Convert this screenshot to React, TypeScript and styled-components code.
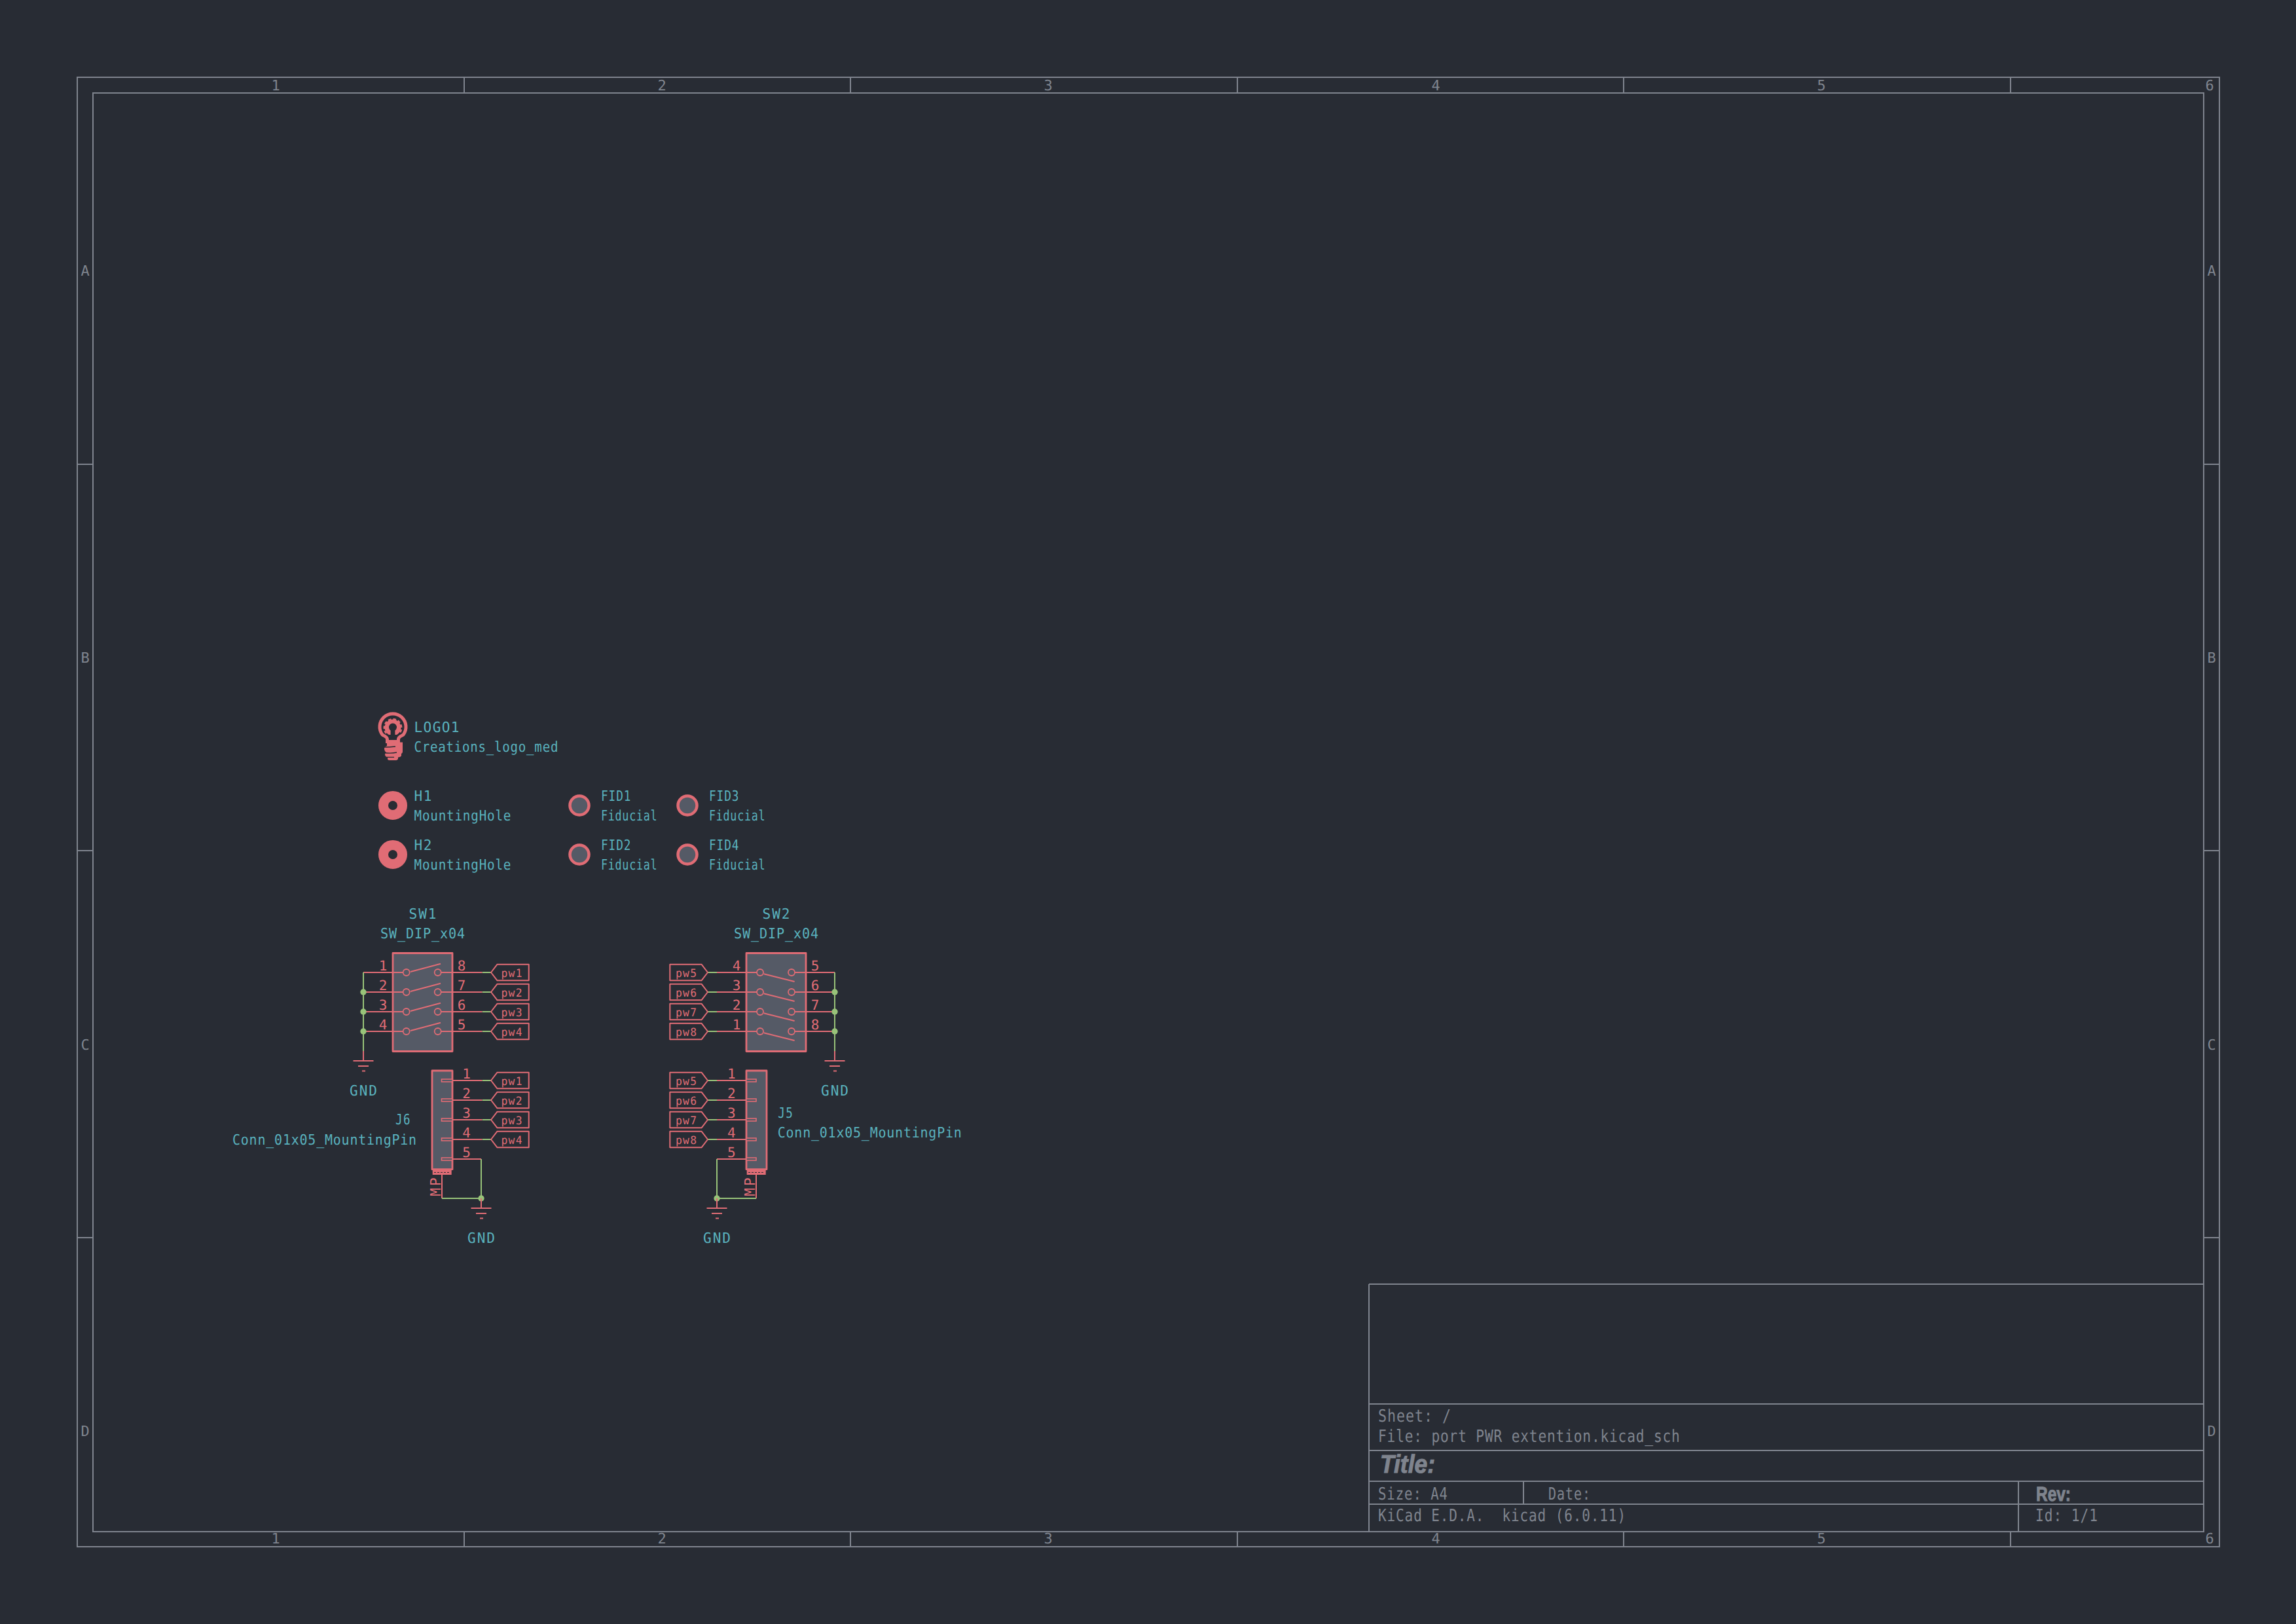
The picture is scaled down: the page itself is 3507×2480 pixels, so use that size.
import React from "react";
import styled, { createGlobalStyle } from "styled-components";

const FRAME = "#7f848e";
const SYMBOL = "#e06c75";
const WIRE = "#98c379";
const PAGE = "#282c34";
const BODY = "#555a66";
const MONO_ADVANCE = 0.602;

const Global = createGlobalStyle`
  html, body { margin: 0; padding: 0; background: ${PAGE}; }
`;

const Sheet = styled.svg`
  display: block;
  width: 3507px;
  height: 2480px;
  background: ${PAGE};
  text-rendering: geometricPrecision;
`;

const FrameLine = styled.line`
  stroke: ${FRAME};
  stroke-width: 2;
`;
const FrameRect = styled.rect`
  fill: none;
  stroke: ${FRAME};
  stroke-width: 2;
`;
const SheetText = styled.text`
  fill: #7f848e;
  font-family: "DejaVu Sans Mono", monospace;
  font-size: 26px;
  white-space: pre;
`;
const TickText = styled.text`
  fill: ${FRAME};
  font-family: "DejaVu Sans Mono", monospace;
  font-size: 22px;
  text-anchor: middle;
`;
const HeadingText = styled.text<{ $italic?: boolean }>`
  fill: ${FRAME};
  font-family: "Liberation Sans", sans-serif;
  font-weight: 700;
  font-style: ${(p) => (p.$italic ? "italic" : "normal")};
  stroke: ${FRAME};
  stroke-width: 1;
`;
const FieldText = styled.text`
  fill: #5ab2be;
  font-family: "DejaVu Sans Mono", monospace;
  font-size: 22px;
`;
const PinNumber = styled.text`
  fill: ${SYMBOL};
  font-family: "DejaVu Sans Mono", monospace;
  font-size: 21px;
  text-anchor: middle;
`;
const MountText = styled.text`
  fill: ${SYMBOL};
  font-family: "DejaVu Sans Mono", monospace;
  font-size: 22px;
`;
const LabelText = styled.text`
  fill: ${SYMBOL};
  font-family: "DejaVu Sans Mono", monospace;
  font-size: 17px;
`;
const PinLine = styled.path`
  fill: none;
  stroke: ${SYMBOL};
  stroke-width: 2;
`;
const WireLine = styled.path`
  fill: none;
  stroke: ${WIRE};
  stroke-width: 2;
`;
const Junction = styled.circle`
  fill: ${WIRE};
`;
const Body = styled.rect`
  fill: ${BODY};
  stroke: ${SYMBOL};
  stroke-width: 2.8;
  stroke-linejoin: round;
`;
const Contact = styled.circle`
  fill: none;
  stroke: ${SYMBOL};
  stroke-width: 1.8;
`;
const Stub = styled.rect`
  fill: ${BODY};
  stroke: ${SYMBOL};
  stroke-width: 1.6;
`;
const MountBar = styled.rect`
  fill: ${SYMBOL};
`;
const MountSpeck = styled.path`
  fill: none;
  stroke: ${PAGE};
  stroke-width: 1;
  stroke-dasharray: 3 2;
`;
const LabelOutline = styled.path`
  fill: none;
  stroke: ${SYMBOL};
  stroke-width: 2;
  stroke-linejoin: round;
`;
const SolidShape = styled.path`
  fill: ${SYMBOL};
`;
const BulbStroke = styled.path`
  fill: none;
  stroke: ${SYMBOL};
  stroke-width: 5;
`;
const GearTeeth = styled.path`
  fill: none;
  stroke: ${SYMBOL};
  stroke-width: 2.5;
  stroke-dasharray: 4.6 3;
`;
const CoilGap = styled.path`
  fill: none;
  stroke: ${PAGE};
  stroke-width: 1.3;
`;
const HoleRing = styled.circle`
  fill: none;
  stroke: ${SYMBOL};
  stroke-width: 15;
`;
const FiducialDot = styled.circle`
  fill: ${BODY};
  stroke: ${SYMBOL};
  stroke-width: 4.5;
`;

type Txt = { x: number; y: number; w: number; t: string };

/** Narrow glyphs spread over a measured width, as the plotter font of the sheet draws them. */
const spread = (x: number, y: number, w: number, t: string, size: number, rotate = 0) => {
  const natural = t.length * MONO_ADVANCE * size;
  const sx = Math.min(0.96, (0.94 * w) / natural);
  return {
    transform: `translate(${x} ${y}) rotate(${rotate}) scale(${sx.toFixed(3)} 1)`,
    textLength: w / sx,
    lengthAdjust: "spacing" as const,
  };
};

const Field = ({ x, y, w, t }: Txt) => <FieldText {...spread(x, y, w, t, 22)}>{t}</FieldText>;
const Meta = ({ x, y, w, t }: Txt) => <SheetText {...spread(x, y, w, t, 26)}>{t}</SheetText>;

const xTicks = [709, 1299, 1890, 2480, 3071];
const yTicks = [709, 1299, 1890];
const xMarks: [string, number][] = [
  ["1", 421],
  ["2", 1011],
  ["3", 1601],
  ["4", 2193],
  ["5", 2782],
  ["6", 3375],
];
const yMarks: [string, number][] = [
  ["A", 421],
  ["B", 1012],
  ["C", 1603],
  ["D", 2193],
];

const Frame = () => (
  <g>
    <FrameRect x={118} y={118} width={3272} height={2244} />
    <FrameRect x={142} y={142} width={3224} height={2197} />
    {xTicks.map((x) => (
      <g key={x}>
        <FrameLine x1={x} y1={118} x2={x} y2={142} />
        <FrameLine x1={x} y1={2339} x2={x} y2={2362} />
      </g>
    ))}
    {yTicks.map((y) => (
      <g key={y}>
        <FrameLine x1={118} y1={y} x2={142} y2={y} />
        <FrameLine x1={3366} y1={y} x2={3390} y2={y} />
      </g>
    ))}
    {xMarks.map(([t, x]) => (
      <g key={t}>
        <TickText x={x} y={138}>{t}</TickText>
        <TickText x={x} y={2357}>{t}</TickText>
      </g>
    ))}
    {yMarks.map(([t, y]) => (
      <g key={t}>
        <TickText x={130} y={y}>{t}</TickText>
        <TickText x={3378} y={y}>{t}</TickText>
      </g>
    ))}
  </g>
);

const TitleBlock = () => (
  <g>
    <FrameLine x1={2091} y1={1961} x2={3366} y2={1961} />
    <FrameLine x1={2091} y1={1961} x2={2091} y2={2339} />
    <FrameLine x1={2091} y1={2144} x2={3366} y2={2144} />
    <FrameLine x1={2091} y1={2215} x2={3366} y2={2215} />
    <FrameLine x1={2091} y1={2262} x2={3366} y2={2262} />
    <FrameLine x1={2091} y1={2297} x2={3366} y2={2297} />
    <FrameLine x1={2327} y1={2262} x2={2327} y2={2297} />
    <FrameLine x1={3083} y1={2262} x2={3083} y2={2339} />
    <Meta x={2105} y={2171} w={111} t="Sheet: /" />
    <Meta x={2105} y={2202} w={461} t="File: port PWR extention.kicad_sch" />
    <HeadingText
      $italic
      x={2108}
      y={2249}
      fontSize={39}
      textLength={84}
      lengthAdjust="spacingAndGlyphs"
    >
      Title:
    </HeadingText>
    <Meta x={2105} y={2290} w={106} t="Size: A4" />
    <Meta x={2365} y={2290} w={64} t="Date:" />
    <Meta x={2105} y={2323} w={378} t="KiCad E.D.A.  kicad (6.0.11)" />
    <HeadingText
      x={3110}
      y={2291.5}
      fontSize={31}
      textLength={53}
      lengthAdjust="spacingAndGlyphs"
    >
      Rev:
    </HeadingText>
    <Meta x={3109} y={2323} w={95} t="Id: 1/1" />
  </g>
);

const Ground = ({ x, y }: { x: number; y: number }) => (
  <g>
    <PinLine d={`M${x} ${y - 15}V${y}M${x - 15.5} ${y}H${x + 15.5}M${x - 8} ${y + 8}H${x + 8}M${x - 2} ${y + 15.5}H${x + 3}`} />
    <Field x={x - 21} y={y + 53} w={42} t="GND" />
  </g>
);

/** Global label whose point faces the symbol. dir = -1: body to the right of the tip. */
const GlobalLabel = ({ tip, y, t, dir }: { tip: number; y: number; t: string; dir: 1 | -1 }) => {
  const far = tip - dir * 57.7;
  const near = tip - dir * 9.5;
  const tx = dir === -1 ? tip + 15.5 : tip - 49;
  return (
    <g>
      <LabelOutline d={`M${tip} ${y}L${near} ${y - 12.3}H${far}V${y + 12.3}H${near}Z`} />
      <LabelText {...spread(tx, y + 6.7, 32, t, 17)}>{t}</LabelText>
    </g>
  );
};

const rows = [0, 1, 2, 3];

const DipSwitch = ({
  bx,
  leftCircle,
  flip,
  leftNums,
  rightNums,
  railX,
  labelTip,
  labels,
  labelSide,
  refName,
  numLeft,
  numRight,
}: {
  bx: number;
  leftCircle: number;
  flip: boolean;
  leftNums: string[];
  rightNums: string[];
  railX: number;
  labelTip: number;
  labels: string[];
  labelSide: 1 | -1;
  refName: string;
  numLeft: number;
  numRight: number;
}) => {
  const rightCircle = leftCircle + 48;
  const pinEnd = labelSide === -1 ? labelTip - 13.3 : labelTip + 14;
  return (
    <g>
      <Body x={bx} y={1455.5} width={91} height={150} />
      <Field x={bx + 24.5} y={1402.7} w={42} t={refName} />
      <Field x={bx - 19} y={1432.7} w={129} t="SW_DIP_x04" />
      {rows.map((i) => {
        const y = 1485 + i * 30;
        return (
          <g key={i}>
            <Contact cx={leftCircle} cy={y} r={5} />
            <Contact cx={rightCircle} cy={y} r={5} />
            {flip ? (
              <PinLine d={`M${leftCircle + 5.7} ${y + 2.3}L${rightCircle + 4.6} ${y + 14}`} />
            ) : (
              <PinLine d={`M${leftCircle + 6.3} ${y - 1}L${rightCircle + 4.3} ${y - 13.3}`} />
            )}
            {labelSide === -1 ? (
              <>
                <PinLine d={`M${railX} ${y}H${leftCircle - 5}`} />
                <PinLine d={`M${rightCircle + 5} ${y}H${pinEnd}`} />
                <WireLine d={`M${pinEnd} ${y}H${labelTip}`} />
              </>
            ) : (
              <>
                <WireLine d={`M${labelTip} ${y}H${pinEnd}`} />
                <PinLine d={`M${pinEnd} ${y}H${leftCircle - 5}`} />
                <PinLine d={`M${rightCircle + 5} ${y}H${railX}`} />
              </>
            )}
            <PinNumber x={numLeft} y={y - 3.5}>{leftNums[i]}</PinNumber>
            <PinNumber x={numRight} y={y - 3.5}>{rightNums[i]}</PinNumber>
            <GlobalLabel tip={labelTip} y={y} t={labels[i]} dir={labelSide === -1 ? -1 : 1} />
            {i > 0 && <Junction cx={railX} cy={y} r={4.7} />}
          </g>
        );
      })}
      <WireLine d={`M${railX} 1485V1605`} />
      <Ground x={railX} y={1620} />
    </g>
  );
};

const Connector = ({ bx, side }: { bx: number; side: "right" | "left" }) => {
  const right = side === "right";
  const stubX = right ? bx + 14.5 : bx;
  const stubEnd = right ? bx + 31 : bx + 15;
  const pinX = bx + 15;
  const tip = right ? 750 : 1081;
  const pinEnd = right ? 736.7 : 1095;
  const railX = right ? 735 : 1095;
  const numX = right ? 712.7 : 1117.3;
  const labels = right ? ["pw1", "pw2", "pw3", "pw4"] : ["pw5", "pw6", "pw7", "pw8"];
  const pinFrom = right ? stubEnd : stubX;
  return (
    <g>
      <Body x={bx} y={1635} width={31} height={150.7} />
      {[0, 1, 2, 3, 4].map((i) => {
        const y = 1650 + i * 30;
        return (
          <g key={i}>
            <Stub x={stubX} y={y - 2} width={stubEnd - stubX} height={4} />
            <PinLine d={`M${pinFrom} ${y}H${i < 4 ? pinEnd : railX}`} />
            <PinNumber x={numX} y={y - 3.5}>{i + 1}</PinNumber>
            {i < 4 && <WireLine d={`M${pinEnd} ${y}H${tip}`} />}
            {i < 4 && <GlobalLabel tip={tip} y={y} t={labels[i]} dir={right ? -1 : 1} />}
          </g>
        );
      })}
      <MountBar x={bx + 0.7} y={1786.7} width={29} height={7.3} />
      <MountSpeck d={`M${bx + 3} 1790.4H${bx + 28}`} />
      <PinLine d={`M${pinX} 1794V1830`} />
      <MountText {...spread(right ? 672.7 : 1152.7, 1826.7, 28.5, "MP", 22, -90)}>MP</MountText>
      <WireLine d={`M${pinX} 1830H${railX}V1770`} />
      <Junction cx={railX} cy={1830} r={4.7} />
      <Ground x={railX} y={1845} />
    </g>
  );
};

const Logo = () => (
  <g>
    <BulbStroke d="M591.5 1132.5V1129C591.5 1125 587 1124 584 1122A20 20 0 1 1 616 1122C613 1124 608.5 1125 608.5 1129V1132.5Z" />
    <SolidShape d="M594.1 1122A12.5 12.5 0 1 1 605.9 1122H603.4V1115.4A6 6 0 1 0 596.6 1115.4V1122Z" />
    <GearTeeth d="M590 1120A13.2 13.2 0 1 1 610 1120" />
    <SolidShape d="M591 1133.5H615V1148Q615 1150 613 1151V1154Q612 1156 608 1156.5V1159Q607 1161 605 1161H595Q592 1161 592 1158.5V1157Q588 1155 588 1152Q588 1150 590 1149Q587 1147 587 1143Q587 1140 591 1139Z" />
    <CoilGap d="M586 1141Q596 1141 604 1140M586 1149.5Q598 1151 606 1149M590 1156.3H602" />
    <Field x={632.5} y={1118.3} w={69} t="LOGO1" />
    <Field x={632.5} y={1147.7} w={220} t="Creations_logo_med" />
  </g>
);

const Hole = ({ y, name }: { y: number; name: string }) => (
  <g>
    <HoleRing cx={600} cy={y} r={14.5} />
    <Field x={632.5} y={y - 7.5} w={27} t={name} />
    <Field x={632.5} y={y + 22.5} w={148} t="MountingHole" />
  </g>
);

const Fiducial = ({ x, y, name }: { x: number; y: number; name: string }) => (
  <g>
    <FiducialDot cx={x} cy={y} r={14.5} />
    <Field x={x + 33} y={y - 7.5} w={45.5} t={name} />
    <Field x={x + 33} y={y + 22.5} w={85.5} t="Fiducial" />
  </g>
);

export default function App() {
  return (
    <>
      <Global />
      <Sheet viewBox="0 0 3507 2480">
        <Frame />
        <TitleBlock />
        <Logo />
        <Hole y={1230} name="H1" />
        <Hole y={1305} name="H2" />
        <Fiducial x={885} y={1230} name="FID1" />
        <Fiducial x={1050} y={1230} name="FID3" />
        <Fiducial x={885} y={1305} name="FID2" />
        <Fiducial x={1050} y={1305} name="FID4" />
        <DipSwitch
          bx={600}
          leftCircle={620.7}
          flip={false}
          leftNums={["1", "2", "3", "4"]}
          rightNums={["8", "7", "6", "5"]}
          railX={555}
          labelTip={750}
          labels={["pw1", "pw2", "pw3", "pw4"]}
          labelSide={-1}
          refName="SW1"
          numLeft={585}
          numRight={705}
        />
        <DipSwitch
          bx={1140}
          leftCircle={1161}
          flip
          leftNums={["4", "3", "2", "1"]}
          rightNums={["5", "6", "7", "8"]}
          railX={1275}
          labelTip={1081}
          labels={["pw5", "pw6", "pw7", "pw8"]}
          labelSide={1}
          refName="SW2"
          numLeft={1125}
          numRight={1245}
        />
        <Connector bx={660} side="right" />
        <Connector bx={1140} side="left" />
        <Field x={604} y={1717.3} w={22.5} t="J6" />
        <Field x={355} y={1747.7} w={281} t="Conn_01x05_MountingPin" />
        <Field x={1188.3} y={1706.7} w={22.5} t="J5" />
        <Field x={1187.7} y={1736.7} w={281} t="Conn_01x05_MountingPin" />
      </Sheet>
    </>
  );
}
